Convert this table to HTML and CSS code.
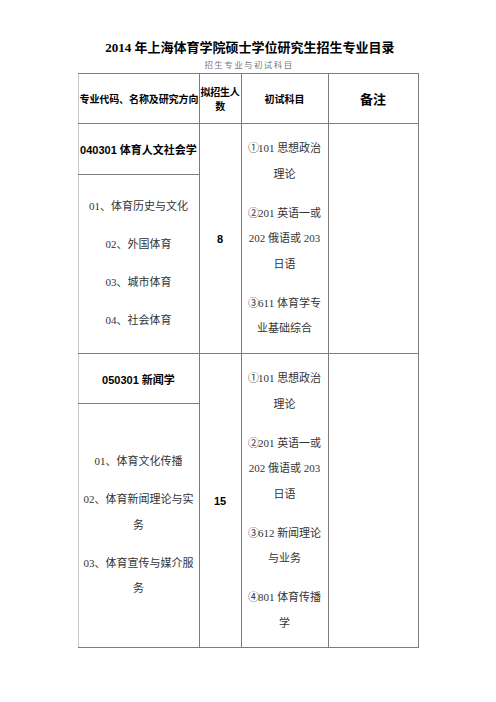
FILE: index.html
```html
<!DOCTYPE html>
<html lang="zh">
<head>
<meta charset="utf-8">
<title>2014年上海体育学院硕士学位研究生招生专业目录</title>
<link rel="stylesheet" href="styles.css">
</head>
<body>
<div class="page">
  <h1 class="title">2014 年上海体育学院硕士学位研究生招生专业目录</h1>
  <div class="subtitle">招生专业与初试科目</div>
  <table class="catalog">
    <colgroup>
      <col class="c1"><col class="c2"><col class="c3"><col class="c4">
    </colgroup>
    <tr class="head">
      <th class="h-major">专业代码、名称及研究方向</th>
      <th class="h-num">拟招生人<br>数</th>
      <th class="h-sub">初试科目</th>
      <th class="h-note">备注</th>
    </tr>
    <tr class="r-name1">
      <td class="major">040301 体育人文社会学</td>
      <td class="num" rowspan="2">8</td>
      <td class="subjects" rowspan="2">
        <p><span class="circ">①</span>101 思想政治<br>理论</p>
        <p><span class="circ">②</span>201 英语一或<br>202 俄语或 203<br>日语</p>
        <p><span class="circ">③</span>611 体育学专<br>业基础综合</p>
      </td>
      <td class="note" rowspan="2"></td>
    </tr>
    <tr class="r-dirs1">
      <td class="dirs">
        <p>01、体育历史与文化</p>
        <p>02、外国体育</p>
        <p>03、城市体育</p>
        <p>04、社会体育</p>
      </td>
    </tr>
    <tr class="r-name2">
      <td class="major">050301 新闻学</td>
      <td class="num" rowspan="2">15</td>
      <td class="subjects" rowspan="2">
        <p><span class="circ">①</span>101 思想政治<br>理论</p>
        <p><span class="circ">②</span>201 英语一或<br>202 俄语或 203<br>日语</p>
        <p><span class="circ">③</span>612 新闻理论<br>与业务</p>
        <p><span class="circ">④</span>801 体育传播<br>学</p>
      </td>
      <td class="note" rowspan="2"></td>
    </tr>
    <tr class="r-dirs2">
      <td class="dirs">
        <p>01、体育文化传播</p>
        <p>02、体育新闻理论与实<br>务</p>
        <p>03、体育宣传与媒介服<br>务</p>
      </td>
    </tr>
  </table>
</div>
</body>
</html>
```

FILE: styles.css
```css
html, body {
  margin: 0;
  padding: 0;
  background: #ffffff;
}

body {
  font-family: "Liberation Serif", "Noto Sans CJK SC", serif;
  color: #1a1a1a;
}

.page {
  padding-top: 40px;
}

.title {
  margin: 0;
  text-align: center;
  font-size: 13px;
  line-height: 16px;
  font-weight: bold;
  color: #000;
  padding-left: 4px;
}

.subtitle {
  margin-top: 3px;
  text-align: center;
  font-family: "Noto Sans CJK SC", sans-serif;
  font-size: 8.5px;
  line-height: 10px;
  letter-spacing: 1.4px;
  color: #7a7a7a;
  padding-left: 2px;
}

.catalog {
  margin: 4px auto 0;
  width: 341px;
  table-layout: fixed;
  border-collapse: collapse;
  border-top: 1px solid #9a9a9a;
  border-right: 1px solid #8a8a8a;
  border-bottom: 1px solid #8a8a8a;
  border-left: 1px solid #c9c9c9;
}

.c1 { width: 121px; }
.c2 { width: 42px; }
.c3 { width: 87px; }
.c4 { width: 90px; }

.catalog th,
.catalog td {
  border: 1px solid #7d7d7d;
  padding: 0 1px;
  vertical-align: middle;
  text-align: center;
  font-size: 11px;
}

.catalog tr > :first-child {
  border-left-color: #c9c9c9;
}

.head { height: 50px; }
.r-name1 { height: 51px; }
.r-dirs1 { height: 179px; }
.r-name2 { height: 50px; }
.r-dirs2 { height: 244px; }

.head th {
  font-family: "Noto Sans CJK SC", sans-serif;
  font-weight: bold;
  font-size: 10px;
  line-height: 12px;
  color: #000;
}

.head .h-major {
  text-align: left;
  white-space: nowrap;
  letter-spacing: -0.1px;
}

.head .h-num {
  padding: 0;
  white-space: nowrap;
  letter-spacing: -0.3px;
  line-height: 14px;
}

.head .h-note {
  font-size: 13px;
}

.major {
  font-family: "Liberation Sans", "Noto Sans CJK SC", sans-serif;
  font-weight: bold;
  font-size: 11px;
  white-space: nowrap;
  color: #000;
}

.num {
  font-family: "Liberation Sans", sans-serif;
  font-weight: bold;
  font-size: 11px;
  color: #000;
}

.dirs p,
.subjects p {
  margin: 0;
  line-height: 25.5px;
  white-space: nowrap;
  color: #333;
}

.dirs p + p,
.subjects p + p {
  margin-top: 12.5px;
}

.circ {
  font-family: "Noto Sans CJK SC", sans-serif;
  font-size: 11px;
  letter-spacing: -1px;
}
```
